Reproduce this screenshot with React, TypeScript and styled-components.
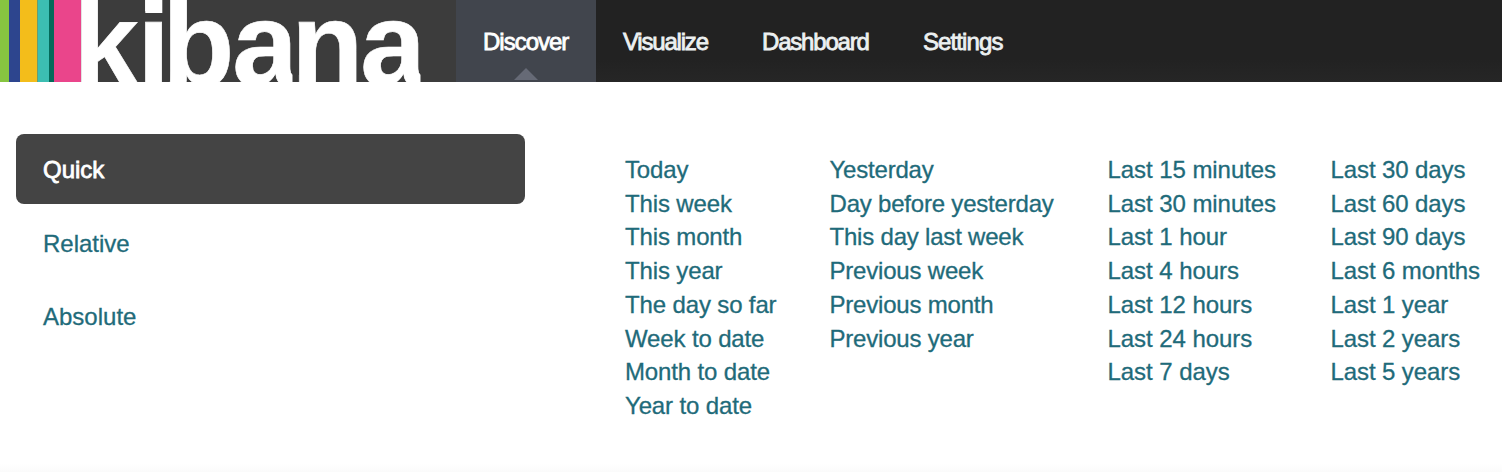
import React from 'react';
import styled, { createGlobalStyle } from 'styled-components';

const GlobalStyle = createGlobalStyle`
  * { box-sizing: border-box; }
  body {
    margin: 0;
    background: #fff;
    font-family: "Liberation Sans", "Helvetica Neue", Helvetica, Arial, sans-serif;
    font-size: 24px;
  }
`;

const Page = styled.div`
  height: 472px;
  overflow: hidden;
  background: linear-gradient(#fff 464px, #fbfbfb 472px);
`;

const Navbar = styled.header`
  display: flex;
  height: 82px;
  background: linear-gradient(#222 60px, #262626 82px);
`;

const Brand = styled.div`
  width: 456px;
  height: 82px;
  background: #3c3c3c;
`;

const Tabs = styled.nav`
  display: flex;
`;

const Tab = styled.a<{ $active?: boolean; $width: number; $spacing: number }>`
  position: relative;
  width: ${(p) => p.$width}px;
  padding-left: 27px;
  line-height: 83px;
  height: 82px;
  white-space: nowrap;
  letter-spacing: ${(p) => p.$spacing}px;
  color: ${(p) => (p.$active ? '#fff' : '#ecf0f1')};
  background: ${(p) => (p.$active ? '#41454d' : 'transparent')};
  -webkit-text-stroke: 0.8px currentColor;

  &::after {
    content: '';
    display: ${(p) => (p.$active ? 'block' : 'none')};
    position: absolute;
    left: 58px;
    bottom: 2px;
    border: 12px solid transparent;
    border-top-width: 0;
    border-bottom-color: #666a76;
  }
`;

const Picker = styled.main`
  display: flex;
  padding: 52px 0 0 16px;
`;

const Modes = styled.ul`
  display: flex;
  flex-direction: column;
  gap: 4px;
  width: 509px;
  margin: 0;
  padding: 0;
  list-style: none;
`;

const Mode = styled.li<{ $active?: boolean }>`
  height: 69.6px;
  padding-left: 27px;
  border-radius: 8px;
  line-height: 72px;
  color: ${(p) => (p.$active ? '#fff' : '#1f6b7a')};
  background: ${(p) => (p.$active ? '#444' : 'transparent')};
  -webkit-text-stroke: ${(p) => (p.$active ? '0.8px' : '0.3px')} currentColor;
`;

const Ranges = styled.div`
  display: flex;
  padding: 19px 0 0 100px;
`;

const Column = styled.ul<{ $width: number; $spacing: number }>`
  width: ${(p) => p.$width}px;
  margin: 0;
  padding: 0;
  list-style: none;
  letter-spacing: ${(p) => p.$spacing}px;
`;

const Range = styled.li`
  line-height: 33.7px;
  white-space: nowrap;
  color: #1f6b7a;
  -webkit-text-stroke: 0.3px currentColor;
`;

const columns = [
  { width: 204.5, spacing: -0.14, items: ['Today', 'This week', 'This month', 'This year', 'The day so far', 'Week to date', 'Month to date', 'Year to date'] },
  { width: 278, spacing: -0.2, items: ['Yesterday', 'Day before yesterday', 'This day last week', 'Previous week', 'Previous month', 'Previous year'] },
  { width: 223, spacing: -0.06, items: ['Last 15 minutes', 'Last 30 minutes', 'Last 1 hour', 'Last 4 hours', 'Last 12 hours', 'Last 24 hours', 'Last 7 days'] },
  { width: 171, spacing: -0.1, items: ['Last 30 days', 'Last 60 days', 'Last 90 days', 'Last 6 months', 'Last 1 year', 'Last 2 years', 'Last 5 years'] },
];

const stripes = [
  [0, 9, '#87c540'],
  [9, 11, '#2d458e'],
  [20, 17.5, '#f3bd1b'],
  [37.5, 11.5, '#3cbeb2'],
  [49, 5, '#036a5a'],
  [54, 27, '#ea458b'],
] as const;

const Logo = () => (
  <svg width="456" height="82" viewBox="0 0 456 82" role="img" aria-label="kibana">
    {stripes.map(([x, w, fill]) => (
      <rect key={x} x={x} width={w} height="82" fill={fill} />
    ))}
    <text
      x="73.3 137.3 162.3 232.2 291.3 360.2"
      y="84.5"
      fill="#fff"
      stroke="#fff"
      strokeWidth="0.6"
      fontFamily="Liberation Sans, Helvetica, Arial, sans-serif"
      fontWeight="700"
      fontSize="118"
    >
      kibana
    </text>
    <rect x="145.3" width="17" height="13" fill="#fff" />
    <rect x="292.5" y="70" width="6.4" height="12" fill="#3c3c3c" />
    <rect x="420.5" y="70" width="12" height="12" fill="#3c3c3c" />
  </svg>
);

export default function App() {
  return (
    <>
      <GlobalStyle />
      <Page>
        <Navbar>
          <Brand><Logo /></Brand>
          <Tabs>
            <Tab $active $width={140} $spacing={-1}>Discover</Tab>
            <Tab $width={139} $spacing={-1.2}>Visualize</Tab>
            <Tab $width={161} $spacing={-1.2}>Dashboard</Tab>
            <Tab $width={135} $spacing={-0.9}>Settings</Tab>
          </Tabs>
        </Navbar>
        <Picker>
          <Modes>
            <Mode $active>Quick</Mode>
            <Mode>Relative</Mode>
            <Mode>Absolute</Mode>
          </Modes>
          <Ranges>
            {columns.map((column) => (
              <Column key={column.items[0]} $width={column.width} $spacing={column.spacing}>
                {column.items.map((item) => <Range key={item}>{item}</Range>)}
              </Column>
            ))}
          </Ranges>
        </Picker>
      </Page>
    </>
  );
}
